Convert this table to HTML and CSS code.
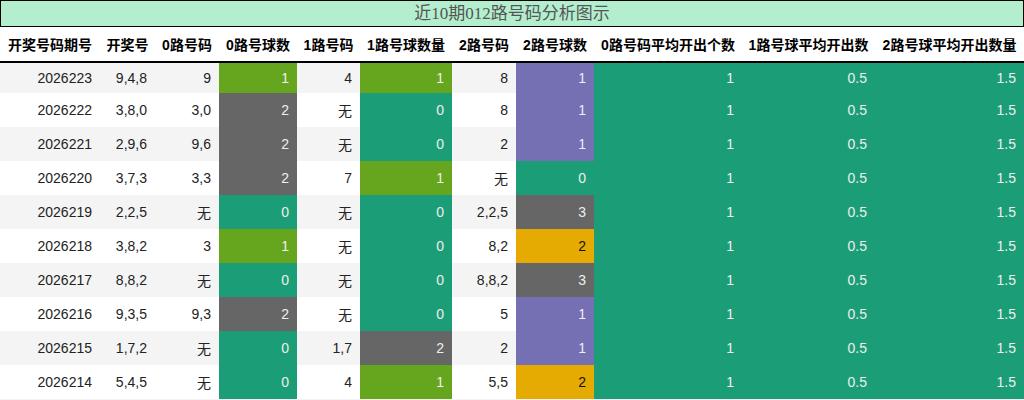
FILE: index.html
```html
<!DOCTYPE html>
<html lang="zh">
<head>
<meta charset="utf-8">
<title>近10期012路号码分析图示</title>
<link rel="stylesheet" href="styles.css">
</head>
<body>
<div class="title">近10期012路号码分析图示</div>
<table class="grid">
<colgroup>
<col class="w100"><col class="w55"><col class="w64"><col class="w78"><col class="w63"><col class="w92"><col class="w64"><col class="w78"><col class="w148"><col class="w133"><col class="w149">
</colgroup>
<thead>
<tr><th>开奖号码期号</th><th>开奖号</th><th>0路号码</th><th>0路号球数</th><th>1路号码</th><th>1路号球数量</th><th>2路号码</th><th>2路号球数</th><th>0路号码平均开出个数</th><th>1路号球平均开出数</th><th>2路号球平均开出数量</th></tr>
</thead>
<tbody>
<tr class="first"><td>2026223</td><td>9,4,8</td><td>9</td><td class="c-lime">1</td><td>4</td><td class="c-lime">1</td><td>8</td><td class="c-purple">1</td><td class="c-teal">1</td><td class="c-teal">0.5</td><td class="c-teal">1.5</td></tr>
<tr><td>2026222</td><td>3,8,0</td><td>3,0</td><td class="c-gray">2</td><td>无</td><td class="c-teal">0</td><td>8</td><td class="c-purple">1</td><td class="c-teal">1</td><td class="c-teal">0.5</td><td class="c-teal">1.5</td></tr>
<tr><td>2026221</td><td>2,9,6</td><td>9,6</td><td class="c-gray">2</td><td>无</td><td class="c-teal">0</td><td>2</td><td class="c-purple">1</td><td class="c-teal">1</td><td class="c-teal">0.5</td><td class="c-teal">1.5</td></tr>
<tr><td>2026220</td><td>3,7,3</td><td>3,3</td><td class="c-gray">2</td><td>7</td><td class="c-lime">1</td><td>无</td><td class="c-teal">0</td><td class="c-teal">1</td><td class="c-teal">0.5</td><td class="c-teal">1.5</td></tr>
<tr><td>2026219</td><td>2,2,5</td><td>无</td><td class="c-teal">0</td><td>无</td><td class="c-teal">0</td><td>2,2,5</td><td class="c-gray">3</td><td class="c-teal">1</td><td class="c-teal">0.5</td><td class="c-teal">1.5</td></tr>
<tr><td>2026218</td><td>3,8,2</td><td>3</td><td class="c-lime">1</td><td>无</td><td class="c-teal">0</td><td>8,2</td><td class="c-yellow">2</td><td class="c-teal">1</td><td class="c-teal">0.5</td><td class="c-teal">1.5</td></tr>
<tr><td>2026217</td><td>8,8,2</td><td>无</td><td class="c-teal">0</td><td>无</td><td class="c-teal">0</td><td>8,8,2</td><td class="c-gray">3</td><td class="c-teal">1</td><td class="c-teal">0.5</td><td class="c-teal">1.5</td></tr>
<tr><td>2026216</td><td>9,3,5</td><td>9,3</td><td class="c-gray">2</td><td>无</td><td class="c-teal">0</td><td>5</td><td class="c-purple">1</td><td class="c-teal">1</td><td class="c-teal">0.5</td><td class="c-teal">1.5</td></tr>
<tr><td>2026215</td><td>1,7,2</td><td>无</td><td class="c-teal">0</td><td>1,7</td><td class="c-gray">2</td><td>2</td><td class="c-purple">1</td><td class="c-teal">1</td><td class="c-teal">0.5</td><td class="c-teal">1.5</td></tr>
<tr><td>2026214</td><td>5,4,5</td><td>无</td><td class="c-teal">0</td><td>4</td><td class="c-lime">1</td><td>5,5</td><td class="c-yellow">2</td><td class="c-teal">1</td><td class="c-teal">0.5</td><td class="c-teal">1.5</td></tr>
</tbody>
</table>
</body>
</html>
```
FILE: styles.css
```css
html, body {
  margin: 0;
  padding: 0;
  background: #f4f4f4;
}
body {
  width: 1024px;
  font-family: "Liberation Sans", "Noto Sans CJK SC", sans-serif;
  font-size: 14px;
  color: #222;
}
.title {
  box-sizing: border-box;
  height: 27px;
  border: 1px solid #000;
  background: #b3eecf;
  color: #555;
  font-family: "Liberation Serif", "Noto Sans CJK SC", serif;
  font-size: 17px;
  line-height: 25px;
  text-align: center;
}
.grid {
  width: 1024px;
  table-layout: fixed;
  border-collapse: separate;
  border-spacing: 0;
}
.w100 { width: 100px; }
.w55 { width: 55px; }
.w64 { width: 64px; }
.w78 { width: 78px; }
.w63 { width: 63px; }
.w92 { width: 92px; }
.w148 { width: 148px; }
.w133 { width: 133px; }
.w149 { width: 149px; }
.grid th {
  background: #fff;
  color: #000;
  font-weight: bold;
  text-align: center;
  white-space: nowrap;
  padding: 0;
  height: 36px;
  border-bottom: 2px solid #000;
  box-sizing: border-box;
}
.grid tbody tr {
  background: #fff;
}
.grid tbody tr:nth-child(odd) {
  background: #f4f4f4;
}
.grid td {
  text-align: right;
  padding: 0 8px 0 0;
  height: 34px;
  white-space: nowrap;
}
.grid tbody tr.first td {
  height: 30px;
}
.c-teal { background: #1b9e77; color: #eee; }
.c-lime { background: #66a61e; color: #eee; }
.c-gray { background: #666666; color: #eee; }
.c-purple { background: #7570b3; color: #eee; }
.c-yellow { background: #e6ab02; color: #111; }
```
